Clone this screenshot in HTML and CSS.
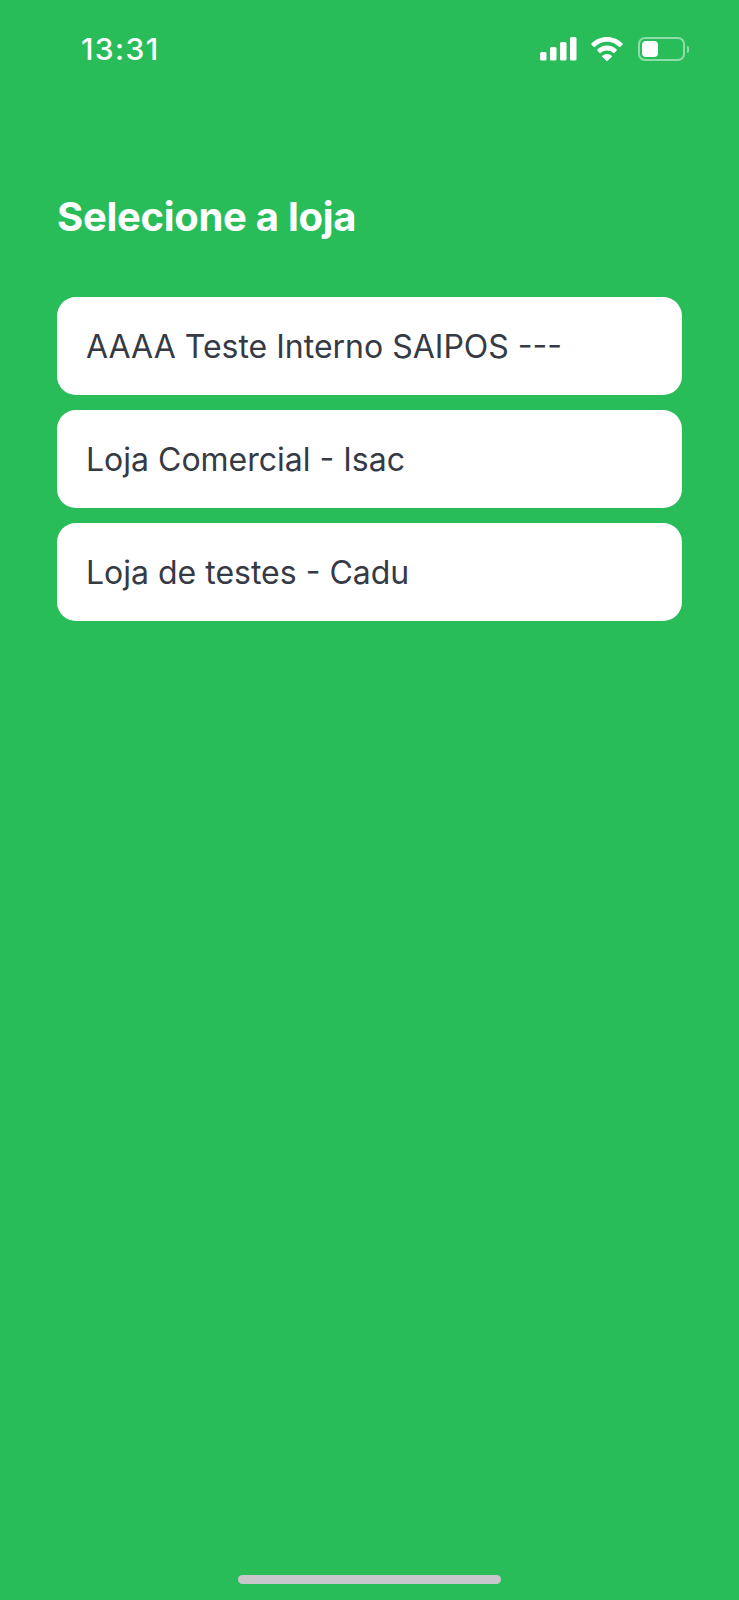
FILE: index.html
```html
<!DOCTYPE html>
<html lang="pt-BR">
<head>
    <meta charset="UTF-8">
    <meta name="viewport" content="width=device-width, initial-scale=1.0">
    <title>Selecione a loja</title>
    <link rel="stylesheet" href="styles.css">
</head>
<body>
    <header class="status-bar">
        <span class="clock">13:31</span>
        <div class="status-icons">
            <svg class="signal" width="37" height="24" viewBox="0 0 37 24" fill="#fff">
                <rect x="0" y="15" width="6.5" height="8.5" rx="1.6"/>
                <rect x="10" y="10" width="6.5" height="13.5" rx="1.6"/>
                <rect x="20" y="5" width="6.5" height="18.5" rx="1.6"/>
                <rect x="30" y="0" width="6.5" height="23.5" rx="1.6"/>
            </svg>
            <svg class="wifi" width="32" height="24" viewBox="0 0 32 24" fill="#fff">
                <path d="M16 0C10 0 4.600 2.400 .6 6.300a1 1 0 0 0 0 1.400l2 2.100a1 1 0 0 0 1.400 0C7.200 6.700 11.400 4.800 16 4.800s8.800 1.900 12 5a1 1 0 0 0 1.400 0l2-2.100a1 1 0 0 0 0-1.400C27.400 2.400 22 0 16 0z"/>
                <path d="M16 8.500c-3.700 0-7 1.400-9.500 3.800a1 1 0 0 0 0 1.400l2 2.100a1 1 0 0 0 1.400 0c1.600-1.400 3.700-2.300 6.100-2.300s4.500.9 6.100 2.300a1 1 0 0 0 1.400 0l2-2.100a1 1 0 0 0 0-1.400C23 9.900 19.700 8.500 16 8.500z"/>
                <path d="M16 17c-1.800 0-3.400.7-4.600 1.800a.9.9 0 0 0 0 1.300l3.900 3.700a1 1 0 0 0 1.400 0l3.900-3.700a.9.9 0 0 0 0-1.300C19.400 17.700 17.800 17 16 17z"/>
            </svg>
            <div class="battery">
                <div class="battery-body">
                    <div class="battery-level"></div>
                </div>
                <div class="battery-tip"></div>
            </div>
        </div>
    </header>

    <main class="content">
        <h1 class="title">Selecione a loja</h1>
        <ul class="store-list">
            <li class="store">AAAA Teste Interno SAIPOS ---</li>
            <li class="store">Loja Comercial - Isac</li>
            <li class="store">Loja de testes - Cadu</li>
        </ul>
    </main>

    <div class="home-bar"></div>
</body>
</html>
```

FILE: styles.css
```css
body {
    margin: 0;
    height: 1600px;
    background-color: #29bd5a;
    font-family: Inter, "Noto Sans", sans-serif;
    display: flex;
    flex-direction: column;
    overflow: hidden;
}
.status-bar {
    display: flex;
    justify-content: space-between;
    align-items: center;
    height: 36px;
    padding: 31px 50px 0 81px;
    color: white;
}
.clock {
    font-size: 30px;
    font-weight: 500;
    line-height: 36px;
    letter-spacing: 1.4px;
}
.status-icons {
    display: flex;
    align-items: center;
}
.signal {
    margin-right: 14px;
}
.wifi {
    margin-right: 15px;
}
.battery {
    display: flex;
    align-items: center;
}
.battery-body {
    width: 47px;
    height: 24px;
    box-sizing: border-box;
    border: 2px solid #8fdda8;
    border-radius: 7px;
    padding: 2px;
}
.battery-level {
    width: 16px;
    height: 100%;
    background-color: white;
    border-radius: 4px;
}
.battery-tip {
    width: 2px;
    height: 7px;
    margin-left: 2px;
    background-color: #8fdda8;
    border-radius: 0 2px 2px 0;
}
.content {
    flex: 1;
    padding: 124px 57px 0;
}
.title {
    margin: 0 0 55px;
    font-size: 40px;
    font-weight: 700;
    line-height: 51px;
    letter-spacing: -0.3px;
    color: white;
}
.store-list {
    list-style: none;
    margin: 0;
    padding: 0;
    display: flex;
    flex-direction: column;
    gap: 15px;
}
.store {
    height: 98px;
    padding-left: 29px;
    display: flex;
    align-items: center;
    background-color: white;
    border-radius: 19px;
    font-size: 32px;
    color: #363a45;
}
.home-bar {
    align-self: center;
    width: 263px;
    height: 9px;
    margin-bottom: 16px;
    background-color: #c8c8cc;
    border-radius: 5px;
}
```
